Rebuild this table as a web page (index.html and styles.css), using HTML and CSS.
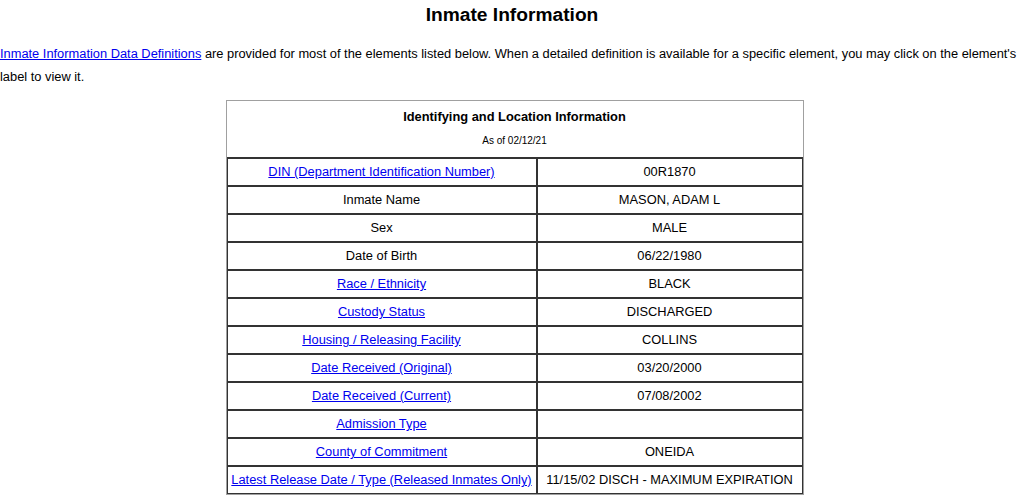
FILE: index.html
```html
<!DOCTYPE html>
<html>
<head>
<meta charset="utf-8">
<link rel="stylesheet" href="styles.css">
</head>
<body>
<h1 class="title">Inmate Information</h1>
<p class="intro"><a href="#">Inmate Information Data Definitions</a> are provided for most of the elements listed below. When a detailed definition is available for a specific element, you may click on the element's label to view it.</p>
<div class="wrap">
<table class="info">
  <thead>
    <tr>
      <th colspan="2" class="head">
        <div class="head-title">Identifying and Location Information</div>
        <div class="head-sub">As of 02/12/21</div>
      </th>
    </tr>
  </thead>
  <tbody>
    <tr><td class="lbl"><a href="#">DIN (Department Identification Number)</a></td><td class="val">00R1870</td></tr>
    <tr><td class="lbl">Inmate Name</td><td class="val">MASON, ADAM L</td></tr>
    <tr><td class="lbl">Sex</td><td class="val">MALE</td></tr>
    <tr><td class="lbl">Date of Birth</td><td class="val">06/22/1980</td></tr>
    <tr><td class="lbl"><a href="#">Race / Ethnicity</a></td><td class="val">BLACK</td></tr>
    <tr><td class="lbl"><a href="#">Custody Status</a></td><td class="val">DISCHARGED</td></tr>
    <tr><td class="lbl"><a href="#">Housing / Releasing Facility</a></td><td class="val">COLLINS</td></tr>
    <tr><td class="lbl"><a href="#">Date Received (Original)</a></td><td class="val">03/20/2000</td></tr>
    <tr><td class="lbl"><a href="#">Date Received (Current)</a></td><td class="val">07/08/2002</td></tr>
    <tr><td class="lbl"><a href="#">Admission Type</a></td><td class="val"></td></tr>
    <tr><td class="lbl"><a href="#">County of Commitment</a></td><td class="val">ONEIDA</td></tr>
    <tr><td class="lbl"><a href="#">Latest Release Date / Type (Released Inmates Only)</a></td><td class="val">11/15/02 DISCH - MAXIMUM EXPIRATION</td></tr>
  </tbody>
</table>
</div>
</body>
</html>
```
FILE: styles.css
```css
body {
  margin: 0;
  font-family: "Liberation Sans", Arial, sans-serif;
  color: #000;
  background: #fff;
}
a { color: #0000ee; }
.title {
  font-size: 19.2px;
  font-weight: bold;
  text-align: center;
  margin: 3px 0 0;
  line-height: 23px;
}
.intro {
  font-size: 12.85px;
  line-height: 23px;
  margin: 16px 0 0;
}
.wrap {
  padding-left: 5px;
  padding-top: 12px;
}
.info {
  margin: 0 auto;
  width: 578px;
  border-collapse: separate;
  border-spacing: 0;
  border: 1px solid #a0a0a0;
  font-size: 12.85px;
}
.head {
  padding: 6px 0 9px;
  border-bottom: 1px solid #333;
}
.head-title {
  font-weight: bold;
  font-size: 12.85px;
  line-height: 20px;
}
.head-sub {
  font-weight: normal;
  font-size: 10px;
  line-height: 14px;
  margin-top: 7px;
}
.info td {
  border: 1px solid #333;
  height: 26px;
  padding: 0 2px;
  text-align: center;
  line-height: 16px;
  white-space: nowrap;
}
.info td.lbl { width: 304px; }
```
